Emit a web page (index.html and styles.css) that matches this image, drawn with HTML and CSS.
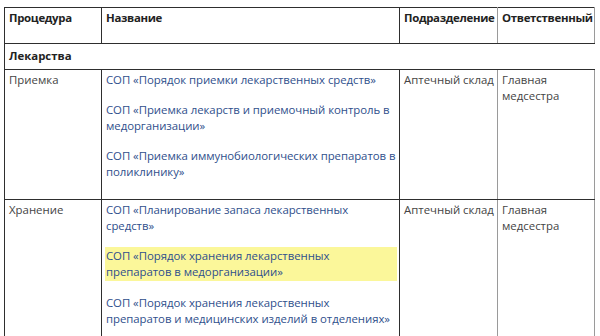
FILE: index.html
```html
<!DOCTYPE html>
<html lang="ru">
<head>
<meta charset="utf-8">
<link rel="stylesheet" href="styles.css">
</head>
<body>
<table class="grid">
  <colgroup>
    <col class="c1"><col class="c2"><col class="c3"><col class="c4">
  </colgroup>
  <thead>
    <tr class="head">
      <th><p class="hp">Процедура</p></th>
      <th class="names"><p class="hp">Название</p></th>
      <th class="mid"><p class="hp">Подразделение</p></th>
      <th class="last"><p class="hp">Ответственный</p></th>
    </tr>
  </thead>
  <tbody>
    <tr class="section">
      <td colspan="4">Лекарства</td>
    </tr>
    <tr class="row">
      <td class="plain">Приемка</td>
      <td class="names">
        <p class="doc">СОП «Порядок приемки лекарственных средств»</p>
        <p class="doc">СОП «Приемка лекарств и приемочный контроль в медорганизации»</p>
        <p class="doc">СОП «Приемка иммунобиологических препаратов в поликлинику»</p>
      </td>
      <td class="plain mid">Аптечный склад</td>
      <td class="plain last">Главная медсестра</td>
    </tr>
    <tr class="row">
      <td class="plain">Хранение</td>
      <td class="names">
        <p class="doc">СОП «Планирование запаса лекарственных средств»</p>
        <p class="doc mark">СОП «Порядок хранения лекарственных препаратов в медорганизации»</p>
        <p class="doc">СОП «Порядок хранения лекарственных препаратов и медицинских изделий в отделениях»</p>
      </td>
      <td class="plain mid">Аптечный склад</td>
      <td class="plain last">Главная медсестра</td>
    </tr>
  </tbody>
</table>
</body>
</html>
```
FILE: styles.css
```css
html, body {
  margin: 0;
  padding: 0;
  background: #ffffff;
}
body {
  padding: 7px 0 0 4px;
  font-family: "Open Sans", "Liberation Sans", sans-serif;
  font-size: 11.4px;
  line-height: 16px;
  color: #444444;
}
.grid {
  border-collapse: collapse;
  table-layout: fixed;
  width: 590px;
}
.c1 { width: 97px; }
.c2 { width: 298px; }
.c3 { width: 98px; }
.c4 { width: 97px; }
.grid th,
.grid td {
  border: 1px solid #2e2e2e;
  vertical-align: top;
  text-align: left;
  padding: 2px 3px 5px 4px;
}
.grid .names {
  padding-right: 2px;
}
.grid .mid,
.grid .last {
  border-right-color: #9a9a9a;
}
.head th {
  font-weight: 700;
  color: #222222;
  letter-spacing: -0.3px;
  padding-bottom: 3px;
}
.hp {
  margin: 0 0 14px 0;
}
.section td {
  font-weight: 700;
  color: #222222;
  border-right: none;
  padding-top: 4px;
  padding-bottom: 5px;
}
.plain {
  color: #444444;
}
.doc {
  margin: 0 0 14px 0;
  color: #2f4f8c;
  letter-spacing: -0.05px;
}
.doc.mark {
  background: #fbf79a;
  margin-left: -1px;
  padding-left: 1px;
  padding-top: 1px;
  padding-bottom: 1px;
  margin-top: -1px;
  margin-bottom: 14px;
}
```
